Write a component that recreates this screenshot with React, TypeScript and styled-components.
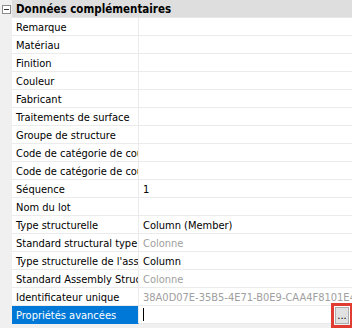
import React from "react";
import styled, {createGlobalStyle} from "styled-components";

const Global = createGlobalStyle`
	html, body {
		margin: 0;
		padding: 0;
		background: #f0f0f0;
	}
	body {
		font-family: Tahoma, "DejaVu Sans Condensed", "Liberation Sans", sans-serif;
		font-size: 11px;
	}
`;

const Grid = styled.div`
	width: 352px;
	height: 328px;
	background: #f0f0f0;
	overflow: hidden;
	display: flex;
	flex-direction: column;
	position: relative;
`;

const Row = styled.div`
	display: flex;
	height: 18px;
	flex-shrink: 0;
`;

const Gutter = styled.div`
	width: 12px;
	flex-shrink: 0;
	display: flex;
	align-items: center;
	justify-content: center;
	background: #f0f0f0;
`;

const Category = styled.div`
	flex: 1;
	background: #dedede;
	border-bottom: 1px solid #e6e6e6;
	font-weight: bold;
	font-size: 11.5px;
	color: #000;
	padding: 1px 0 0 4px;
	display: flex;
	align-items: center;
	white-space: nowrap;
`;

const Toggle = styled.span`
	width: 7px;
	height: 7px;
	border: 1px solid #8c8c8c;
	background: #fff;
	position: relative;
	margin-left: 1px;
	&::after {
		content: "";
		position: absolute;
		left: 1px;
		right: 1px;
		top: 3px;
		height: 1px;
		background: #333;
	}
`;

const Name = styled.div<{selected?: boolean}>`
	width: 122px;
	flex-shrink: 0;
	padding: 2px 0 0 4px;
	background: ${p => (p.selected ? "#0078d7" : "#fff")};
	color: ${p => (p.selected ? "#fff" : "#000")};
	border-bottom: 1px solid ${p => (p.selected ? "#0078d7" : "#ebebeb")};
	border-right: 1px solid #ebebeb;
	display: flex;
	align-items: center;
	white-space: nowrap;
	overflow: hidden;
	text-overflow: clip;
`;

const Value = styled.div<{muted?: boolean}>`
	flex: 1;
	min-width: 0;
	padding: 2px 0 0 4px;
	background: #fff;
	color: ${p => (p.muted ? "#a0a0a0" : "#000")};
	border-bottom: 1px solid #ebebeb;
	display: flex;
	align-items: center;
	white-space: nowrap;
	overflow: hidden;
`;

const Caret = styled.span`
	width: 1px;
	height: 13px;
	margin-top: -2px;
	background: #000;
`;

const Ellipsis = styled.button`
	position: absolute;
	left: 335px;
	top: 307px;
	width: 14px;
	height: 17px;
	box-sizing: border-box;
	padding: 0 0 1px;
	margin: 0;
	background: #e1e1e1;
	border: 1px solid #adadad;
	outline: 3px solid #e03c31;
	outline-offset: 1px;
	font: 11px "DejaVu Sans Condensed", sans-serif;
	color: #000;
	display: flex;
	align-items: flex-end;
	justify-content: center;
	line-height: 12px;
`;

const rows: {name: string; value?: string; muted?: boolean}[] = [
	{name: "Remarque"},
	{name: "Matériau"},
	{name: "Finition"},
	{name: "Couleur"},
	{name: "Fabricant"},
	{name: "Traitements de surface"},
	{name: "Groupe de structure"},
	{name: "Code de catégorie de coût"},
	{name: "Code de catégorie de coût"},
	{name: "Séquence", value: "1"},
	{name: "Nom du lot"},
	{name: "Type structurelle", value: "Column (Member)"},
	{name: "Standard structural type", value: "Colonne", muted: true},
	{name: "Type structurelle de l'assemblage", value: "Column"},
	{name: "Standard Assembly Structural type", value: "Colonne", muted: true},
	{name: "Identificateur unique", value: "38A0D07E-35B5-4E71-B0E9-CAA4F8101E46", muted: true}
];

export default function App() {
	return (
		<>
			<Global />
			<Grid>
				<Row>
					<Gutter>
						<Toggle />
					</Gutter>
					<Category>Données complémentaires</Category>
				</Row>
				{rows.map((r, i) => (
					<Row key={i}>
						<Gutter />
						<Name>{r.name}</Name>
						<Value muted={r.muted}>{r.value}</Value>
					</Row>
				))}
				<Row>
					<Gutter />
					<Name selected>Propriétés avancées</Name>
					<Value>
						<Caret />
					</Value>
				</Row>
				<Ellipsis>...</Ellipsis>
			</Grid>
		</>
	);
}
